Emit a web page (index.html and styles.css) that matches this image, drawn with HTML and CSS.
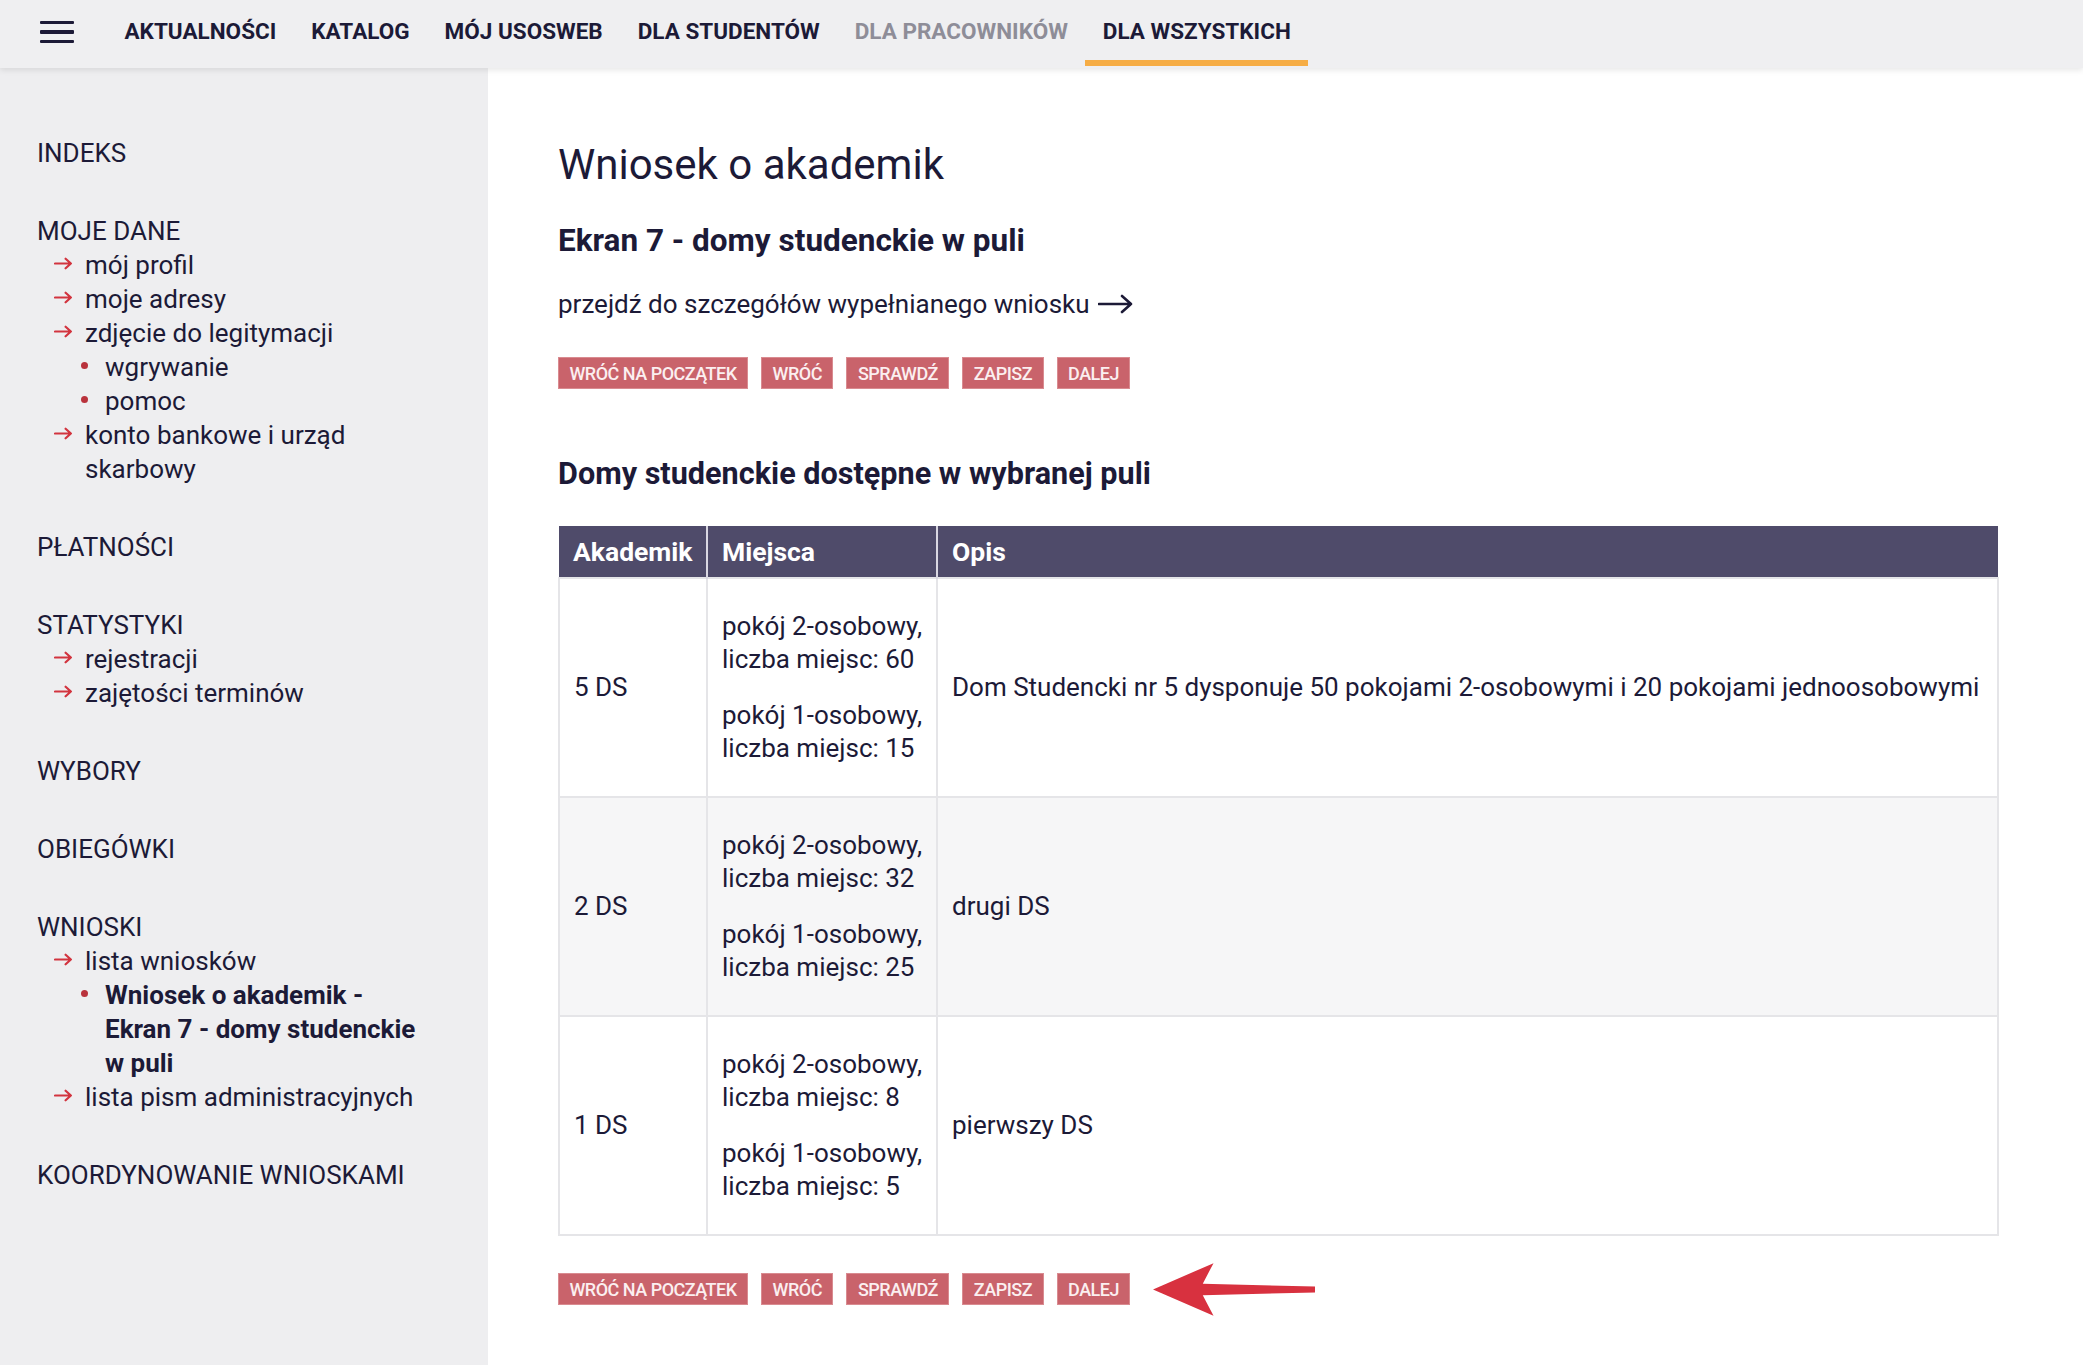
FILE: index.html
```html
<!DOCTYPE html>
<html lang="pl">
<head>
<meta charset="utf-8">
<title>Wniosek o akademik</title>
<link rel="stylesheet" href="styles.css">
</head>
<body>
<header class="topbar">
  <button class="burger" aria-label="menu">
    <span></span><span></span><span></span>
  </button>
  <nav class="mainnav">
    <a class="nav-item">AKTUALNOŚCI</a>
    <a class="nav-item">KATALOG</a>
    <a class="nav-item">MÓJ USOSWEB</a>
    <a class="nav-item">DLA STUDENTÓW</a>
    <a class="nav-item muted">DLA PRACOWNIKÓW</a>
    <a class="nav-item active">DLA WSZYSTKICH</a>
  </nav>
</header>
<div class="layout">
  <aside class="side">
    <div class="sec"><div class="sec-title">INDEKS</div></div>
    <div class="sec">
      <div class="sec-title">MOJE DANE</div>
      <ul class="sub">
        <li class="ar"><svg class="ico" viewBox="0 0 18 12"><path d="M1 6H16M11 1.5L16 6L11 10.5"/></svg><span>mój profil</span></li>
        <li class="ar"><svg class="ico" viewBox="0 0 18 12"><path d="M1 6H16M11 1.5L16 6L11 10.5"/></svg><span>moje adresy</span></li>
        <li class="ar"><svg class="ico" viewBox="0 0 18 12"><path d="M1 6H16M11 1.5L16 6L11 10.5"/></svg><span>zdjęcie do legitymacji</span></li>
        <li class="dot"><span>wgrywanie</span></li>
        <li class="dot"><span>pomoc</span></li>
        <li class="ar"><svg class="ico" viewBox="0 0 18 12"><path d="M1 6H16M11 1.5L16 6L11 10.5"/></svg><span>konto bankowe i urząd skarbowy</span></li>
      </ul>
    </div>
    <div class="sec"><div class="sec-title">PŁATNOŚCI</div></div>
    <div class="sec">
      <div class="sec-title">STATYSTYKI</div>
      <ul class="sub">
        <li class="ar"><svg class="ico" viewBox="0 0 18 12"><path d="M1 6H16M11 1.5L16 6L11 10.5"/></svg><span>rejestracji</span></li>
        <li class="ar"><svg class="ico" viewBox="0 0 18 12"><path d="M1 6H16M11 1.5L16 6L11 10.5"/></svg><span>zajętości terminów</span></li>
      </ul>
    </div>
    <div class="sec"><div class="sec-title">WYBORY</div></div>
    <div class="sec"><div class="sec-title">OBIEGÓWKI</div></div>
    <div class="sec">
      <div class="sec-title">WNIOSKI</div>
      <ul class="sub">
        <li class="ar"><svg class="ico" viewBox="0 0 18 12"><path d="M1 6H16M11 1.5L16 6L11 10.5"/></svg><span>lista wniosków</span></li>
        <li class="dot current"><span>Wniosek o akademik - Ekran 7 - domy studenckie w puli</span></li>
        <li class="ar"><svg class="ico" viewBox="0 0 18 12"><path d="M1 6H16M11 1.5L16 6L11 10.5"/></svg><span>lista pism administracyjnych</span></li>
      </ul>
    </div>
    <div class="sec"><div class="sec-title">KOORDYNOWANIE WNIOSKAMI</div></div>
  </aside>
  <main class="content">
    <h1 class="title">Wniosek o akademik</h1>
    <h2 class="subtitle">Ekran 7 - domy studenckie w puli</h2>
    <a class="details">przejdź do szczegółów wypełnianego wniosku <svg class="big-arrow" viewBox="0 0 36 20"><path d="M1 10H33M24 2L33 10L24 18"/></svg></a>
    <div class="btns top">
      <span class="btn">WRÓĆ NA POCZĄTEK</span>
      <span class="btn">WRÓĆ</span>
      <span class="btn">SPRAWDŹ</span>
      <span class="btn">ZAPISZ</span>
      <span class="btn">DALEJ</span>
    </div>
    <h3 class="section">Domy studenckie dostępne w wybranej puli</h3>
    <table class="grid">
      <colgroup><col class="c1"><col class="c2"><col class="c3"></colgroup>
      <thead>
        <tr><th>Akademik</th><th>Miejsca</th><th>Opis</th></tr>
      </thead>
      <tbody>
        <tr>
          <td>5 DS</td>
          <td><p>pokój 2-osobowy, liczba miejsc: 60</p><p>pokój 1-osobowy, liczba miejsc: 15</p></td>
          <td>Dom Studencki nr 5 dysponuje 50 pokojami 2-osobowymi i 20 pokojami jednoosobowymi</td>
        </tr>
        <tr class="alt">
          <td>2 DS</td>
          <td><p>pokój 2-osobowy, liczba miejsc: 32</p><p>pokój 1-osobowy, liczba miejsc: 25</p></td>
          <td>drugi DS</td>
        </tr>
        <tr>
          <td>1 DS</td>
          <td><p>pokój 2-osobowy, liczba miejsc: 8</p><p>pokój 1-osobowy, liczba miejsc: 5</p></td>
          <td>pierwszy DS</td>
        </tr>
      </tbody>
    </table>
    <div class="btns bottom">
      <span class="btn">WRÓĆ NA POCZĄTEK</span>
      <span class="btn">WRÓĆ</span>
      <span class="btn">SPRAWDŹ</span>
      <span class="btn">ZAPISZ</span>
      <span class="btn">DALEJ</span>
      <svg class="pointer" viewBox="0 0 166 56"><path d="M0 28 L62 1 L51 22 L166 25 L166 31 L51 34 L62 55 Z"/></svg>
    </div>
  </main>
</div>
</body>
</html>
```

FILE: styles.css
```css
* { box-sizing: border-box; }
html, body { margin: 0; padding: 0; }
body {
  font-family: Roboto, "Liberation Sans", sans-serif;
  color: #1c1a37;
  background: #ffffff;
  min-height: 100vh;
  display: flex;
  flex-direction: column;
}

/* top bar */
.topbar {
  height: 68px;
  background: #efeff1;
  display: flex;
  align-items: stretch;
  box-shadow: 0 2px 6px rgba(0,0,0,0.10);
  position: relative;
  z-index: 2;
}
.burger {
  border: 0;
  background: transparent;
  width: 107px;
  padding: 0 0 0 40px;
  display: flex;
  flex-direction: column;
  justify-content: center;
  gap: 6px;
  margin-top: -4px;
}
.burger span {
  display: block;
  width: 34px;
  height: 3.5px;
  background: #1c1a37;
  border-radius: 1px;
}
.mainnav { display: flex; align-items: stretch; }
.nav-item {
  display: flex;
  align-items: center;
  padding: 2px 17.5px 0;
  font-weight: 700;
  font-size: 22.5px;
  color: #1c1a37;
  border-bottom: 6px solid transparent;
  margin-bottom: 2px;
}
.nav-item.muted { color: #8e8d98; }
.nav-item.active { border-bottom-color: #f6ad45; }

/* layout */
.layout { display: flex; flex: 1; }
.side {
  width: 488px;
  flex: 0 0 488px;
  background: #eeeef0;
  padding: 68px 58px 40px 37px;
  font-size: 26px;
  line-height: 34px;
}
.sec { margin-bottom: 44px; }
.sec-title { color: #1c1a37; }
.sub { list-style: none; margin: 0; padding: 0; }
.sub li { display: flex; align-items: flex-start; }
.sub li.ar { padding-left: 17px; }
.ico {
  width: 19px;
  height: 13px;
  flex: 0 0 19px;
  margin: 9px 12px 0 0;
  fill: none;
  stroke: #d2343f;
  stroke-width: 2.1;
  stroke-linecap: round;
  stroke-linejoin: round;
}
.sub li.dot { padding-left: 68px; position: relative; }
.sub li.dot::before {
  content: "";
  position: absolute;
  left: 44px;
  top: 12px;
  width: 7px;
  height: 7px;
  border-radius: 50%;
  background: #b9323c;
}
.sub li.current { font-weight: 700; }

/* content */
.content {
  flex: 1;
  padding: 73px 85px 40px 70px;
}
.title {
  margin: 0;
  font-size: 42px;
  line-height: 48px;
  font-weight: 400;
}
.subtitle {
  margin: 34px 0 0;
  font-size: 31.5px;
  line-height: 36px;
  font-weight: 700;
}
.details {
  display: inline-flex;
  align-items: center;
  gap: 8px;
  margin-top: 29px;
  font-size: 26px;
  line-height: 32px;
}
.big-arrow {
  width: 36px;
  height: 20px;
  fill: none;
  stroke: #1c1a37;
  stroke-width: 2.6;
  stroke-linecap: round;
  stroke-linejoin: round;
}
.btns { display: flex; align-items: center; gap: 13px; height: 32px; }
.btns.top { margin-top: 37px; }
.btns.bottom { margin-top: 37px; }
.btn {
  display: inline-flex;
  align-items: center;
  height: 32px;
  padding: 0 11.5px;
  background: #c9636b;
  color: #fbeff0;
  font-size: 18px;
  font-weight: 500;
  letter-spacing: -0.5px;
  box-shadow: 0 0 0 1px #d98b90 inset;
}
.section {
  margin: 67px 0 0;
  font-size: 30.6px;
  line-height: 36px;
  font-weight: 700;
}
.grid {
  margin-top: 34px;
  width: 1441px;
  border-collapse: collapse;
  table-layout: fixed;
  font-size: 26px;
  line-height: 33px;
}
.c1 { width: 148px; }
.c2 { width: 230px; }
.grid th {
  background: #4f4b6a;
  color: #ffffff;
  text-align: left;
  font-weight: 700;
  font-size: 26.5px;
  height: 52px;
  padding: 0 14px;
  border-left: 2px solid #d9d7e2;
}
.grid th:first-child { border-left: 0; }
.grid td {
  padding: 31px 14px;
  vertical-align: middle;
  border: 2px solid #e5e5e8;
}
.grid tr.alt td { background: #f6f6f7; }
.grid td p { margin: 0; }
.grid td p + p { margin-top: 23px; }
.pointer {
  width: 162px;
  height: 55px;
  margin: -12px 0 -12px 10px;
  flex: 0 0 162px;
  fill: #d8313f;
}
```
